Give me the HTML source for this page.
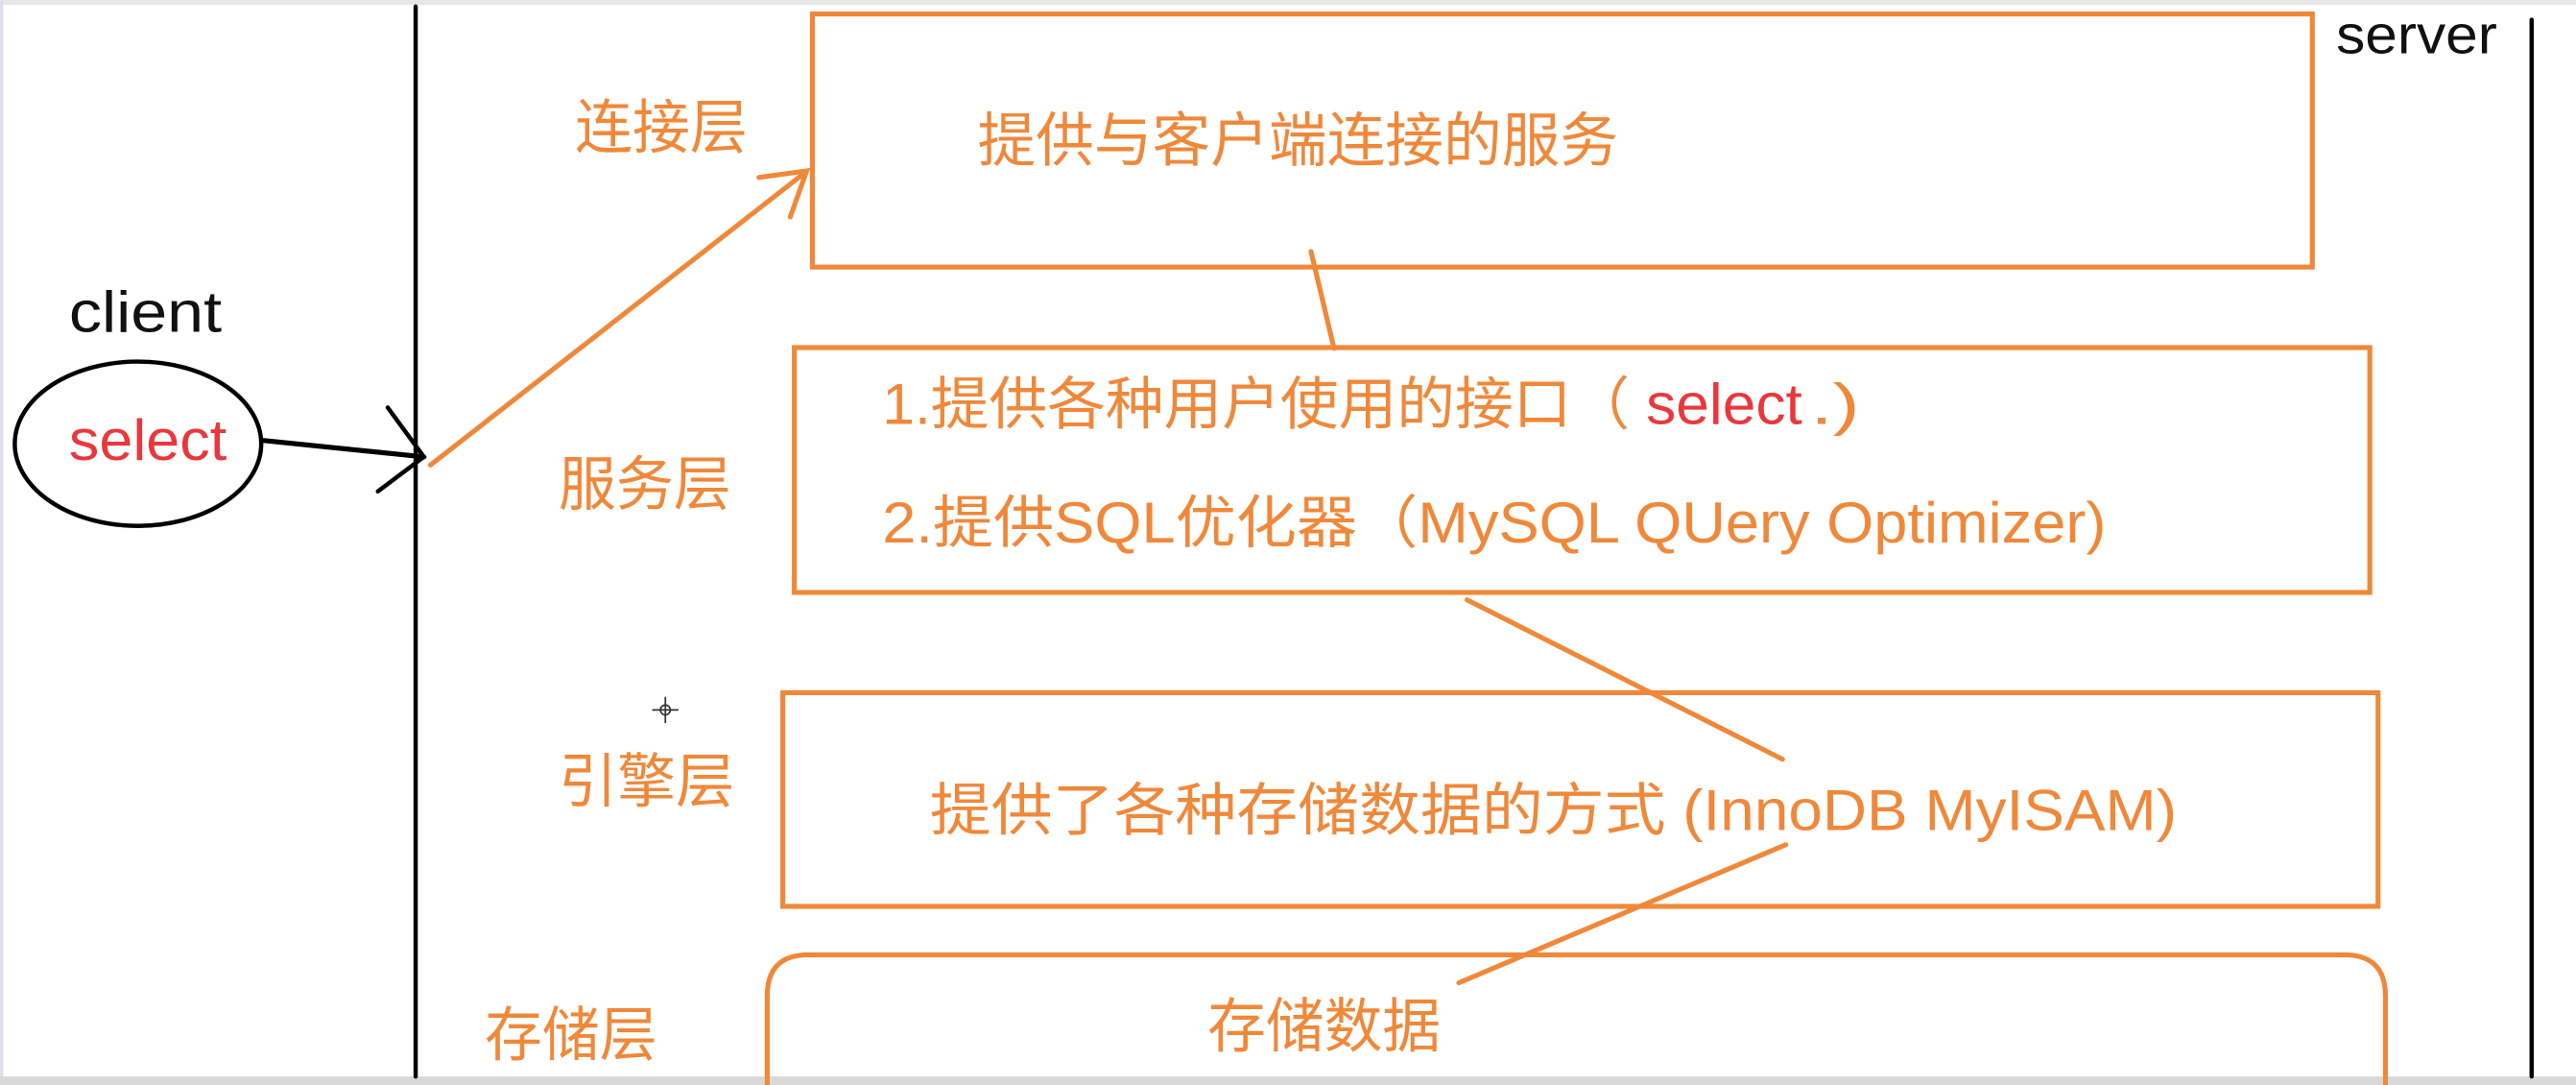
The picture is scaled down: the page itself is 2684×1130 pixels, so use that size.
<!DOCTYPE html>
<html><head><meta charset="utf-8"><style>
html,body{margin:0;padding:0;background:#fff;width:2684px;height:1130px;overflow:hidden}
svg{display:block}
text{font-family:"Liberation Sans","Noto Sans CJK SC",sans-serif;dominant-baseline:central}
.o{fill:#f0883a}
.k{fill:#111}
.r{fill:#e8383d}
</style></head><body>
<svg width="2684" height="1130" viewBox="0 0 1568 660.2" preserveAspectRatio="none">
<rect x="0" y="0" width="1568" height="660.2" fill="#fff"/>
<rect x="0" y="0" width="1568" height="3" fill="#e6e6e6"/>
<rect x="0" y="0" width="2" height="660" fill="#dde0ea"/>
<rect x="0" y="655" width="1568" height="6" fill="#d8d8d8"/>
<g stroke="#000" stroke-width="2.6" fill="none" stroke-linecap="round">
<line x1="253" y1="4" x2="253" y2="655"/>
<line x1="1541" y1="12" x2="1541" y2="655"/>
<ellipse cx="84" cy="270" rx="75" ry="50"/>
<line x1="160" y1="268" x2="258" y2="278" stroke-width="3"/>
<polyline points="236,248 258,278 230,299"/>
</g>
<g stroke="#f0883a" stroke-width="3" fill="none" stroke-linecap="round">
<line x1="262" y1="283" x2="490" y2="105"/>
<polyline points="462,108 491,104 481,132"/>
<rect x="494.5" y="8.5" width="913" height="154"/>
<line x1="798" y1="153" x2="812" y2="212"/>
<rect x="483.5" y="211.5" width="959" height="149"/>
<line x1="893" y1="365" x2="1085" y2="462"/>
<rect x="476.5" y="421.5" width="971" height="130"/>
<line x1="1087" y1="514" x2="888" y2="598"/>
<path d="M467,661 L467,606 Q467,581 492,581 L1427,581 Q1452,581 1452,606 L1452,661"/>
</g>
<g stroke="#333" stroke-width="1" fill="none">
<line x1="397" y1="432" x2="413" y2="432"/><line x1="405" y1="424" x2="405" y2="440"/>
<circle cx="405" cy="432" r="3"/>
</g>
<text class="k" x="1422" y="21" font-size="33" textLength="98" lengthAdjust="spacingAndGlyphs">server</text>
<text class="k" x="42" y="190" font-size="35" textLength="93" lengthAdjust="spacingAndGlyphs">client</text>
<text class="r" x="42" y="268" font-size="35" textLength="96" lengthAdjust="spacingAndGlyphs">select</text>
<text class="o" x="350" y="78" font-size="36" textLength="105" lengthAdjust="spacingAndGlyphs">连接层</text>
<text class="o" x="595" y="86" font-size="36" textLength="390" lengthAdjust="spacingAndGlyphs">提供与客户端连接的服务</text>
<text class="o" x="340" y="295" font-size="36" textLength="105" lengthAdjust="spacingAndGlyphs">服务层</text>
<text class="o" x="537" y="246" font-size="35" textLength="455" lengthAdjust="spacingAndGlyphs">1.提供各种用户使用的接口（</text>
<text class="r" x="1002" y="246" font-size="35" textLength="95" lengthAdjust="spacingAndGlyphs">select</text>
<text class="o" x="1102" y="246" font-size="35" textLength="30" lengthAdjust="spacingAndGlyphs">.)</text>
<text class="o" x="537" y="318" font-size="35" textLength="745" lengthAdjust="spacingAndGlyphs">2.提供SQL优化器（MySQL QUery Optimizer)</text>
<text class="o" x="340" y="476" font-size="36" textLength="107" lengthAdjust="spacingAndGlyphs">引擎层</text>
<text class="o" x="566" y="493" font-size="35" textLength="759" lengthAdjust="spacingAndGlyphs">提供了各种存储数据的方式 (InnoDB  MyISAM)</text>
<text class="o" x="295" y="630" font-size="36" textLength="105" lengthAdjust="spacingAndGlyphs">存储层</text>
<text class="o" x="735" y="625" font-size="36" textLength="142" lengthAdjust="spacingAndGlyphs">存储数据</text>
</svg>
</body></html>
